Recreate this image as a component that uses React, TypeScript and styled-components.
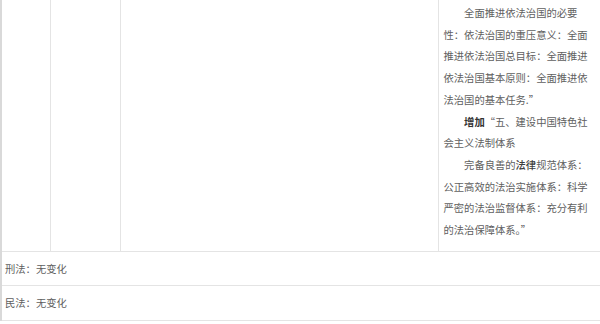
import React from 'react';
import styled, { createGlobalStyle } from 'styled-components';

const GlobalStyle = createGlobalStyle`
  html, body {
    margin: 0;
    padding: 0;
    background: #ffffff;
  }
  body {
    font-family: "Noto Sans CJK SC", "Noto Sans", sans-serif;
  }
`;

const App = () => {
  return (
    <>
      <GlobalStyle />
      <LawTable>
        <colgroup>
          <col style={{ width: 49 }} />
          <col style={{ width: 70 }} />
          <col style={{ width: 318 }} />
          <col style={{ width: 163 }} />
        </colgroup>
        <tbody>
          <TopRow>
            <Cell />
            <Cell />
            <Cell />
            <TextCell>
              <Para>
                全面推进依法治国的必要性：依法治国的重压意义：全面推进依法治国总目标：全面推进依法治国基本原则：全面推进依法治国的基本任务.”
              </Para>
              <Para>
                <Strong>增加</Strong>“五、建设中国特色社会主义法制体系
              </Para>
              <Para>
                完备良善的<Soft>法律</Soft>规范体系：公正高效的法治实施体系：科学严密的法治监督体系：充分有利的法治保障体系。”
              </Para>
            </TextCell>
          </TopRow>
          <tr>
            <NoteCell colSpan={4}>刑法：无变化</NoteCell>
          </tr>
          <tr>
            <NoteCell colSpan={4}>民法：无变化</NoteCell>
          </tr>
        </tbody>
      </LawTable>
    </>
  );
};

// Styled Components
const LawTable = styled.table`
  width: 600px;
  table-layout: fixed;
  border-collapse: collapse;
  border-left: 2px solid #d9d9d9;
  border-right: 2px solid #ececec;
  color: #606060;
  font-size: 10.3px;
  line-height: 21.7px;
`;

const TopRow = styled.tr`
  td {
    border-top: none;
  }
`;

const Cell = styled.td`
  border: 1px solid #e4e4e4;
  padding: 0;
  vertical-align: top;
`;

const TextCell = styled(Cell)`
  padding: 2px 11px 10px 5px;
`;

const Para = styled.p`
  margin: 0;
  text-indent: 2em;
`;

const Strong = styled.b`
  color: #333333;
  font-weight: bold;
`;

const Soft = styled.span`
  color: #3c3c3c;
  font-weight: 500;
`;

const NoteCell = styled.td`
  border: 1px solid #e4e4e4;
  height: 34.6px;
  padding: 0 4px 0 3px;
  box-sizing: border-box;
  vertical-align: middle;
`;

export default App;
